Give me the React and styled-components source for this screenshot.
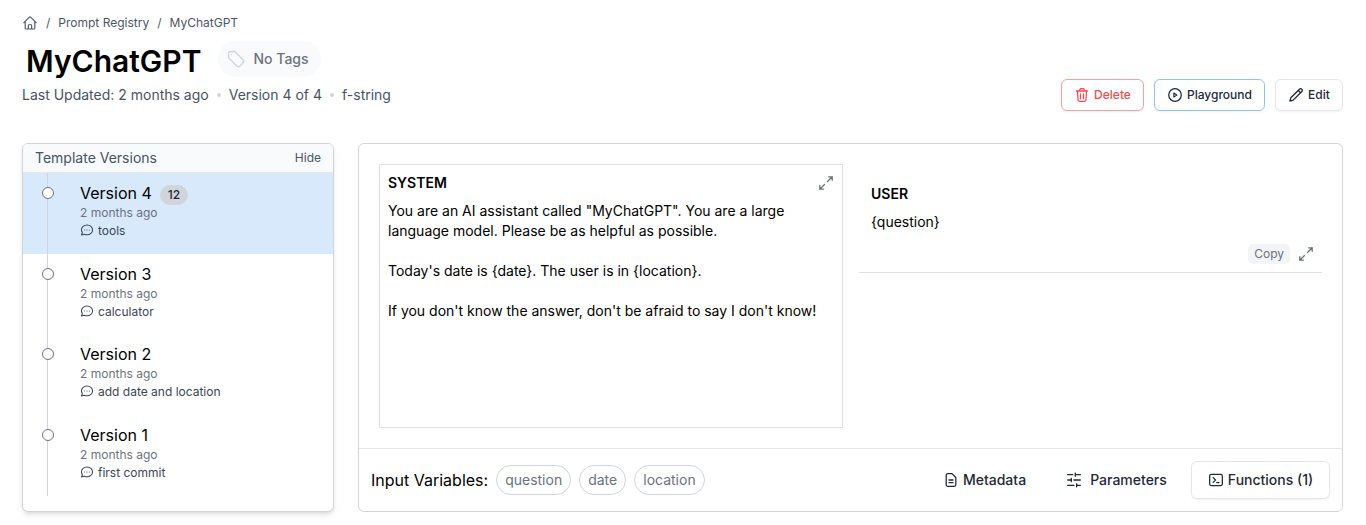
import React from 'react';
import styled, { createGlobalStyle } from 'styled-components';

const GlobalStyle = createGlobalStyle`
  * { box-sizing: border-box; }
  body { margin: 0; background: #fff; overflow: hidden; font-family: Inter, "Liberation Sans", sans-serif; color: #000; }
  button { font-family: inherit; margin: 0; cursor: pointer; }
`;

const Page = styled.div`
  width: 1366px;
  height: 525px;
  padding: 14px 23px 13px 22px;
  display: flex;
  flex-direction: column;
`;

const Svg = styled.svg`
  flex: none;
  display: block;
  fill: none;
  stroke: currentColor;
  stroke-linecap: round;
  stroke-linejoin: round;
`;

const Icon = ({ size = 16, weight = 1.5, children }) => (
  <Svg width={size} height={size} viewBox="0 0 24 24" strokeWidth={weight}>{children}</Svg>
);

const HomeIcon = () => (
  <Icon size={16} weight={1.7}>
    <path d="M2.8 11.5l8.4-8.3a1.13 1.13 0 0 1 1.6 0l8.4 8.3M4.8 9.8v10c0 .62.5 1.12 1.12 1.12h12.16c.62 0 1.12-.5 1.12-1.12v-10M9.5 20.8v-5c0-.62.5-1.12 1.13-1.12h2.74c.63 0 1.13.5 1.13 1.12v5" />
  </Icon>
);
const TagIcon = () => (
  <Icon size={20} weight={1.6}>
    <path d="M9.57 3H5.25A2.25 2.25 0 0 0 3 5.25v4.32c0 .6.24 1.17.66 1.59l9.58 9.58c.7.7 1.78.87 2.6.33a18.1 18.1 0 0 0 5.23-5.23c.54-.82.37-1.9-.33-2.6L11.16 3.66A2.25 2.25 0 0 0 9.57 3Z" />
    <path d="M6.5 6.5h.01" />
  </Icon>
);
const TrashIcon = () => (
  <Icon size={16} weight={1.9}>
    <path d="M3.7 6h16.6M8.3 6l.6-2.3A1.5 1.5 0 0 1 10.3 2.6h3.4a1.5 1.5 0 0 1 1.4 1.1L15.7 6M5.2 6l.8 13.2a2.4 2.4 0 0 0 2.4 2.3h7.2a2.4 2.4 0 0 0 2.4-2.3L18.8 6M9.8 10.5v7M14.2 10.5v7" />
  </Icon>
);
const PlayIcon = () => (
  <Icon size={16} weight={1.9}>
    <circle cx="12" cy="12" r="9.4" />
    <path d="M10.2 9.1l4.6 2.9-4.6 2.9z" strokeWidth="1.6" />
  </Icon>
);
const PencilIcon = () => (
  <Icon size={16} weight={2}>
    <path d="M2.8 21.2l1.5-5L17.2 3.3a2.45 2.45 0 0 1 3.5 3.5L7.8 19.7zM15.3 5.2l3.5 3.5" />
  </Icon>
);
const ChatIcon = () => (
  <Icon size={14} weight={1.8}>
    <path d="M12 3.5c5.3 0 9.5 3.7 9.5 8.3s-4.2 8.4-9.5 8.4c-1.6 0-3.2-.4-4.5-1L2.5 20.5l1.6-4.2a7.6 7.6 0 0 1-1.6-4.5c0-4.6 4.2-8.3 9.5-8.3Z" />
    <path d="M8 12h.01M12 12h.01M16 12h.01" />
  </Icon>
);
const ExpandIcon = () => (
  <Icon size={16} weight={2}>
    <path d="M14.3 9.7L21.3 2.7M16 2.7h5.3V8M9.7 14.3L2.7 21.3M2.7 16v5.3H8" />
  </Icon>
);
const FileIcon = () => (
  <Icon size={16} weight={1.9}>
    <path d="M13.5 2.5H7A2.2 2.2 0 0 0 4.8 4.7v14.6A2.2 2.2 0 0 0 7 21.5h10a2.2 2.2 0 0 0 2.2-2.2V8.2zM9 12h6M9 16h6" />
  </Icon>
);
const SlidersIcon = () => (
  <Icon size={16} weight={2}>
    <path d="M2.5 4H10M14 4h7.5M14 1.8v4.4M2.5 12H8M12 12h9.5M8 9.8v4.4M2.5 20H12M16 20h5.5M16 17.8v4.4" />
  </Icon>
);
const TerminalIcon = () => (
  <Icon size={16} weight={1.9}>
    <rect x="2.5" y="3.7" width="19" height="16.6" rx="2.3" />
    <path d="M7.7 8.5l3.5 3.5-3.5 3.5M13 15.8h3.5" />
  </Icon>
);

const Breadcrumb = styled.nav`
  display: flex;
  align-items: center;
  gap: 8px;
  height: 18px;
  font-size: 12px;
  line-height: 18px;
  color: #4b5568;
`;

const Header = styled.header`
  display: flex;
  justify-content: space-between;
  height: 111px;
`;
const TitleRow = styled.div`
  display: flex;
  align-items: center;
  gap: 16px;
  height: 36px;
  margin-top: 9px;
  padding-left: 4px;
`;
const Title = styled.h1`
  margin: 0;
  padding-top: 4px;
  font-size: 30px;
  line-height: 36px;
  font-weight: 600;
`;
const TagPill = styled.div`
  display: flex;
  align-items: center;
  gap: 8px;
  height: 36px;
  padding: 0 12px 1px 8px;
  border-radius: 18px;
  background: #f9fafc;
  color: #6b7280;
  font-size: 14px;
  font-weight: 500;
  & svg { color: #d1d5db; }
`;
const Meta = styled.div`
  display: flex;
  align-items: center;
  gap: 8px;
  margin-top: 8px;
  font-size: 14px;
  line-height: 20px;
  color: #465467;
`;
const Dot = styled.span`
  width: 4px;
  height: 4px;
  border-radius: 50%;
  background: #d1d5db;
`;
const Actions = styled.div`
  display: flex;
  gap: 10px;
  padding-top: 47px;
`;
const tones = {
  danger: ['#ff9ea2', '#fb4850'],
  primary: ['#8cc5fb', '#1d2939'],
  plain: ['#e4e6ea', '#1d2939'],
};
const ActionButton = styled.button`
  display: flex;
  align-items: center;
  justify-content: center;
  gap: 4px;
  width: ${(p) => p.$width}px;
  height: 32px;
  padding: 0 0 1px;
  border: 1px solid ${(p) => tones[p.$tone][0]};
  border-radius: 6px;
  background: #fff;
  color: ${(p) => tones[p.$tone][1]};
  font-size: 12px;
  font-weight: 550;
  box-shadow: 0 1px 2px rgba(0, 0, 0, 0.05);
`;

const Content = styled.main`
  display: flex;
  gap: 24px;
  height: 369px;
`;
const Sidebar = styled.aside`
  width: 312px;
  border: 1px solid #d1d5db;
  border-radius: 6px;
  overflow: hidden;
  background: #fff;
  box-shadow: 0 4px 6px -1px rgba(0, 0, 0, 0.1), 0 2px 4px -2px rgba(0, 0, 0, 0.1);
`;
const SidebarHead = styled.div`
  display: flex;
  align-items: center;
  justify-content: space-between;
  height: 29px;
  padding: 0 12px 2px;
  background: #f9fafc;
  border-bottom: 1px solid #e5e7eb;
  font-size: 14px;
  color: #465467;
`;
const HideButton = styled.button`
  border: 0;
  padding: 0;
  background: none;
  color: #4b5568;
  font-size: 12px;
`;
const VersionRow = styled.div`
  display: flex;
  height: ${(p) => p.$height}px;
  background: ${(p) => (p.$active ? '#d9e9fc' : '#fff')};
`;
const Track = styled.div`
  display: flex;
  justify-content: center;
  width: 49px;
  background: linear-gradient(#d1d5db, #d1d5db) 24px 0 / 1px ${(p) => (p.$last ? '81px' : '100%')} no-repeat;
`;
const Knob = styled.span`
  width: 12px;
  height: 12px;
  margin: 14px 0 0 1px;
  border: 1px solid #6b7280;
  border-radius: 50%;
  background: #fff;
`;
const VersionInfo = styled.div`
  padding: 8px 0 0 8px;
`;
const VersionName = styled.div`
  display: flex;
  align-items: center;
  gap: 8px;
  height: 24px;
  font-size: 16px;
`;
const Count = styled.span`
  height: 20px;
  margin-top: 4px;
  padding: 0 8px;
  border-radius: 10px;
  background: #d1d5db;
  color: #1f2937;
  font-size: 12px;
  line-height: 20px;
  font-weight: 550;
`;
const When = styled.div`
  height: 15px;
  font-size: 12px;
  line-height: 15px;
  color: #6b7280;
`;
const Comment = styled.div`
  display: flex;
  align-items: center;
  gap: 4px;
  height: 20px;
  font-size: 12px;
  color: #3a4657;
`;

const Panel = styled.section`
  display: flex;
  flex-direction: column;
  width: 985px;
  border: 1px solid #d1d5db;
  border-radius: 6px;
`;
const Messages = styled.div`
  display: flex;
  gap: 16px;
  height: 304px;
  padding: 20px;
`;
const SystemBox = styled.article`
  width: 464px;
  padding: 8px;
  border: 1px solid #e0e0e0;
`;
const BoxHead = styled.div`
  display: flex;
  align-items: center;
  justify-content: space-between;
  height: 20px;
  color: #6b7280;
`;
const Role = styled.span`
  color: #000;
  font-size: 14px;
  line-height: 20px;
  font-weight: 640;
`;
const Text = styled.p`
  margin: 8px 0 0;
  font-size: 14px;
  line-height: 20px;
  white-space: pre-wrap;
`;
const UserBox = styled.article`
  width: 463px;
  height: 109px;
  padding: 20px 8px 0 12px;
  border-bottom: 1px solid #e0e0e0;
`;
const BoxTools = styled.div`
  display: flex;
  align-items: center;
  justify-content: flex-end;
  gap: 8px;
  margin-top: 12px;
  color: #6b7280;
`;
const CopyButton = styled.button`
  height: 20px;
  padding: 0 6px;
  border: 0;
  border-radius: 5px;
  background: #f3f4f6;
  color: #6b7280;
  font-size: 12px;
  line-height: 20px;
`;

const Footer = styled.footer`
  display: flex;
  align-items: center;
  justify-content: space-between;
  height: 63px;
  padding: 0 12px;
  border-top: 1px solid #e5e7eb;
`;
const Group = styled.div`
  display: flex;
  align-items: center;
  gap: 8px;
  font-size: 16px;
`;
const Chip = styled.span`
  height: 30px;
  padding: 0 8px;
  border: 1px solid #d0d5dd;
  border-radius: 15px;
  color: #6b7280;
  font-size: 14px;
  line-height: 28px;
`;
const FooterButton = styled.button`
  display: flex;
  align-items: center;
  justify-content: center;
  gap: ${(p) => p.$gap}px;
  width: ${(p) => p.$width}px;
  height: 38px;
  padding: 0 0 1px;
  border: 1px solid ${(p) => (p.$outlined ? '#e5e7eb' : 'transparent')};
  border-radius: 6px;
  background: #fff;
  color: #1d2939;
  font-size: 14px;
  font-weight: 540;
  box-shadow: ${(p) => (p.$outlined ? '0 1px 2px rgba(0, 0, 0, 0.05)' : 'none')};
`;

const versions = [
  { n: 4, note: 'tools', count: 12, height: 81 },
  { n: 3, note: 'calculator', height: 80 },
  { n: 2, note: 'add date and location', height: 81 },
  { n: 1, note: 'first commit', height: 81 },
];

const prompt = `You are an AI assistant called "MyChatGPT". You are a large language model. Please be as helpful as possible.

Today's date is {date}. The user is in {location}.

If you don't know the answer, don't be afraid to say I don't know!`;

export default function App() {
  return (
    <>
      <GlobalStyle />
      <Page>
        <Breadcrumb>
          <HomeIcon />
          <span>/</span>
          <span>Prompt Registry</span>
          <span>/</span>
          <span>MyChatGPT</span>
        </Breadcrumb>
        <Header>
          <div>
            <TitleRow>
              <Title>MyChatGPT</Title>
              <TagPill><TagIcon />No Tags</TagPill>
            </TitleRow>
            <Meta>
              <span>Last Updated: 2 months ago</span>
              <Dot />
              <span>Version 4 of 4</span>
              <Dot />
              <span>f-string</span>
            </Meta>
          </div>
          <Actions>
            <ActionButton $tone="danger" $width={83}><TrashIcon />Delete</ActionButton>
            <ActionButton $tone="primary" $width={111}><PlayIcon />Playground</ActionButton>
            <ActionButton $tone="plain" $width={68}><PencilIcon />Edit</ActionButton>
          </Actions>
        </Header>
        <Content>
          <Sidebar>
            <SidebarHead>Template Versions<HideButton>Hide</HideButton></SidebarHead>
            {versions.map((v) => (
              <VersionRow key={v.n} $height={v.height} $active={v.n === 4}>
                <Track $last={v.n === 1}><Knob /></Track>
                <VersionInfo>
                  <VersionName>Version {v.n}{v.count && <Count>{v.count}</Count>}</VersionName>
                  <When>2 months ago</When>
                  <Comment><ChatIcon />{v.note}</Comment>
                </VersionInfo>
              </VersionRow>
            ))}
          </Sidebar>
          <Panel>
            <Messages>
              <SystemBox>
                <BoxHead><Role>SYSTEM</Role><ExpandIcon /></BoxHead>
                <Text>{prompt}</Text>
              </SystemBox>
              <UserBox>
                <BoxHead><Role>USER</Role></BoxHead>
                <Text>{'{question}'}</Text>
                <BoxTools><CopyButton>Copy</CopyButton><ExpandIcon /></BoxTools>
              </UserBox>
            </Messages>
            <Footer>
              <Group>
                Input Variables:
                <Chip>question</Chip>
                <Chip>date</Chip>
                <Chip>location</Chip>
              </Group>
              <Group>
                <FooterButton $width={115} $gap={4}><FileIcon />Metadata</FooterButton>
                <FooterButton $width={133} $gap={8}><SlidersIcon />Parameters</FooterButton>
                <FooterButton $width={139} $gap={4} $outlined><TerminalIcon />Functions (1)</FooterButton>
              </Group>
            </Footer>
          </Panel>
        </Content>
      </Page>
    </>
  );
}
